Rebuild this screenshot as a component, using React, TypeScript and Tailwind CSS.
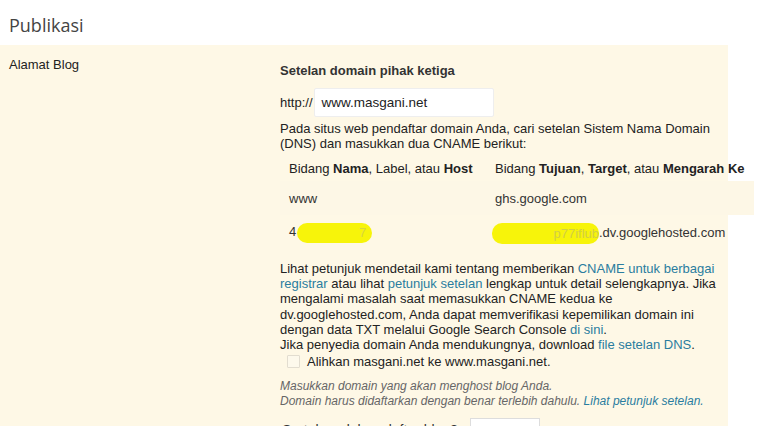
import React from "react";

const link = "text-[#2a7d9f]";

export default function App() {
  return (
    <div className="w-[779px] h-[426px] overflow-hidden bg-white font-['Liberation_Sans',Arial,sans-serif] text-[13px] leading-[15px] text-[#222]">
      <div className="h-[45px] pl-[9px] pt-[12px] font-['Open_Sans',sans-serif] text-[18px] leading-[26px] text-[#444]">
        Publikasi
      </div>
      <div className="w-[728px] bg-[#fef8e6] flex min-h-[400px]">
        <div className="w-[280px] shrink-0 pl-[9px] pt-[12px]">Alamat Blog</div>
        <div className="w-[448px] shrink-0 pt-[18px]">
          <div className="font-bold text-[#333]">Setelan domain pihak ketiga</div>
          <div className="flex items-center mt-[10px]">
            <span className="mr-[1px]">http://</span>
            <div className="w-[180px] h-[29px] bg-white border border-[#eee] rounded-[2px] pl-[7px] flex items-center text-[13.5px]">
              www.masgani.net
            </div>
          </div>
          <p className="mt-[4px] leading-[15px]">
            Pada situs web pendaftar domain Anda, cari setelan Sistem Nama Domain (DNS) dan masukkan dua CNAME berikut:
          </p>
          <table className="w-[474px] mt-[7px] border-collapse whitespace-nowrap">
            <tbody>
              <tr className="h-[23px]">
                <td className="w-[206px] pl-[9px] align-top pt-[3px]">
                  Bidang <b>Nama</b>, Label, atau <b>Host</b>
                </td>
                <td className="pl-[9px] align-top pt-[3px]">
                  Bidang <b>Tujuan</b>, <b>Target</b>, atau <b>Mengarah Ke</b>
                </td>
              </tr>
              <tr className="h-[34px] bg-[#fdf7e6]">
                <td className="pl-[9px] text-[#333]">www</td>
                <td className="pl-[9px] text-[#333]">ghs.google.com</td>
              </tr>
              <tr className="h-[36px]">
                <td className="pl-[9px] text-[#333]">
                  4
                  <span className="inline-block align-middle ml-[1px] w-[75px] h-[20px] rounded-[10px] bg-[#f7f40a] text-right pr-[6px] text-[#d9d63e] leading-[20px]">
                    7
                  </span>
                </td>
                <td className="pl-[6px] text-[#333]">
                  <span className="inline-block align-middle w-[107px] h-[21px] rounded-[10px] bg-[#f7f40a] text-right text-[#d2cf44] leading-[21px]">
                    p77iflub
                  </span>
                  .dv.googlehosted.com
                </td>
              </tr>
            </tbody>
          </table>
          <p className="mt-[10px] leading-[15.2px]">
            Lihat petunjuk mendetail kami tentang memberikan <span className={link}>CNAME untuk berbagai registrar</span> atau lihat{" "}
            <span className={link}>petunjuk setelan</span> lengkap untuk detail selengkapnya. Jika mengalami masalah saat memasukkan CNAME kedua ke dv.googlehosted.com, Anda dapat memverifikasi kepemilikan domain ini dengan data TXT melalui Google Search Console <span className={link}>di sini</span>.
          </p>
          <p className="leading-[15.2px]">
            Jika penyedia domain Anda mendukungnya, download <span className={link}>file setelan DNS</span>.
          </p>
          <div className="flex items-center mt-[2px] pl-[7px]">
            <span className="w-[13px] h-[13px] border border-[#e2ddd0] bg-[#fdf9ec] rounded-[1px]"></span>
            <span className="ml-[7px]">Alihkan masgani.net ke www.masgani.net.</span>
          </div>
          <div className="mt-[10px] italic text-[12px] leading-[15px] text-[#666]">
            <div>Masukkan domain yang akan menghost blog Anda.</div>
            <div>
              Domain harus didaftarkan dengan benar terlebih dahulu. <span className={link}>Lihat petunjuk setelan.</span>
            </div>
          </div>
          <div className="flex items-start mt-[9px] pl-[2px]">
            <span className="text-[14px] leading-[16px] text-[#333] pt-[4px]">Sertakan dalam daftar blog?</span>
            <span className="ml-[12px] w-[70px] h-[22px] bg-white border border-[#ddd]"></span>
          </div>
        </div>
      </div>
    </div>
  );
}
